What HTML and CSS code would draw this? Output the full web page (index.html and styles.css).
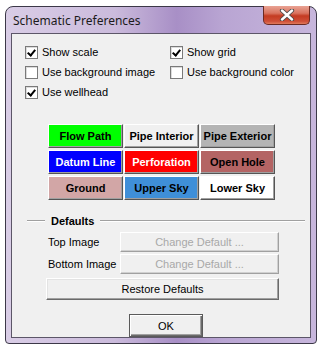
FILE: index.html
```html
<!DOCTYPE html>
<html lang="en">
<head>
    <meta charset="UTF-8">
    <meta name="viewport" content="width=device-width, initial-scale=1.0">
    <title>Schematic Preferences</title>
    <link rel="stylesheet" href="styles.css">
</head>
<body>
    <div class="window">
        <div class="titlebar">
            <span class="title">Schematic Preferences</span>
            <button class="close-btn" title="Close">
                <svg width="18" height="12" viewBox="0 0 18 12">
                    <path d="M4 1.5 L14 10.5 M14 1.5 L4 10.5" stroke="#4a4a4a" stroke-width="4.2" stroke-linecap="round"/>
                    <path d="M4 1.5 L14 10.5 M14 1.5 L4 10.5" stroke="#ffffff" stroke-width="2.4" stroke-linecap="round"/>
                </svg>
            </button>
        </div>

        <div class="client">
            <div class="options">
                <label class="check"><span class="box on"></span>Show scale</label>
                <label class="check"><span class="box on"></span>Show grid</label>
                <label class="check"><span class="box"></span>Use background image</label>
                <label class="check"><span class="box"></span>Use background color</label>
                <label class="check"><span class="box on"></span>Use wellhead</label>
            </div>

            <div class="colors">
                <button class="swatch flow">Flow Path</button>
                <button class="swatch pipe-in">Pipe Interior</button>
                <button class="swatch pipe-out">Pipe Exterior</button>
                <button class="swatch datum">Datum Line</button>
                <button class="swatch perf">Perforation</button>
                <button class="swatch open-hole">Open Hole</button>
                <button class="swatch ground">Ground</button>
                <button class="swatch upper-sky">Upper Sky</button>
                <button class="swatch lower-sky">Lower Sky</button>
            </div>

            <div class="group-title"><span>Defaults</span></div>

            <div class="default-row">
                <span class="row-label">Top Image</span>
                <button class="btn disabled">Change Default ...</button>
            </div>
            <div class="default-row">
                <span class="row-label">Bottom Image</span>
                <button class="btn disabled">Change Default ...</button>
            </div>

            <button class="btn restore">Restore Defaults</button>

            <button class="btn ok">OK</button>
        </div>
    </div>
</body>
</html>
```

FILE: styles.css
```css
body {
    margin: 0;
    background: #ffffff;
    font-family: "Liberation Sans", Arial, sans-serif;
    font-size: 11px;
    color: #000;
}

/* window frame */
.window {
    margin: 6px 0 0 5px;
    width: 300px;
    height: 330px;
    border: 1px solid #3c3848;
    border-radius: 8px 8px 4px 4px;
    background: linear-gradient(90deg, #d9cde6 0%, #cbbbdc 35%, #a88fc6 55%, #b9a5d3 70%, #c7b6dc 100%);
    display: flex;
    flex-direction: column;
    padding: 0 5px 6px 5px;
}

.titlebar {
    height: 26px;
    flex: none;
    display: flex;
    align-items: center;
    justify-content: space-between;
    margin: 0 -5px;
    padding-left: 7px;
}

.title {
    font-family: "Noto Sans", "Open Sans", sans-serif;
    font-size: 12px;
    color: #1b1b1b;
    margin-top: 1px;
}

.close-btn {
    align-self: flex-start;
    margin-top: -1px;
    margin-right: 6px;
    width: 47px;
    height: 19px;
    padding: 0;
    border: 1px solid #6b2a22;
    border-top: none;
    border-radius: 0 0 5px 5px;
    background: linear-gradient(180deg, #e9a394 0%, #d9735f 40%, #c43b22 55%, #cf4f38 85%, #e07a5c 100%);
    display: flex;
    align-items: center;
    justify-content: center;
}

.client {
    flex: 1;
    border: 1px solid #5c5668;
    background: #f0f0f0;
    display: flex;
    flex-direction: column;
    align-items: flex-start;
}

/* checkboxes */
.options {
    display: grid;
    grid-template-columns: 145px auto;
    grid-auto-rows: 20px;
    padding: 8px 0 0 13px;
}

.check {
    display: flex;
    align-items: center;
    gap: 4px;
    white-space: nowrap;
}

.box {
    width: 11px;
    height: 11px;
    border: 1px solid #7a7a7a;
    background: #fff;
    box-shadow: inset 1px 1px 0 #dcdcdc;
    position: relative;
}

.box.on::after {
    content: "";
    position: absolute;
    left: 3px;
    top: 1px;
    width: 3px;
    height: 6px;
    border: solid #000;
    border-width: 0 2px 2px 0;
    transform: rotate(40deg);
}

/* colour swatches */
.colors {
    display: grid;
    grid-template-columns: repeat(3, 75px);
    grid-auto-rows: 24px;
    column-gap: 1px;
    row-gap: 2px;
    margin: 22px 0 0 36px;
}

.swatch {
    font-family: "Liberation Sans", Arial, sans-serif;
    font-size: 11px;
    font-weight: bold;
    padding: 0;
    border: 1px solid;
    border-color: #ffffff #555555 #555555 #ffffff;
    box-shadow: inset -1px -1px 0 #a0a0a0;
    color: #000;
}

.flow { background: #00ff00; }
.pipe-in { background: #f0f0f0; }
.pipe-out { background: #b4b4b4; }
.datum { background: #0000ff; color: #fff; }
.perf { background: #ff0000; color: #fff; }
.open-hole { background: #b46464; }
.ground { background: #d2a6a6; }
.upper-sky { background: #3f8fd8; }
.lower-sky { background: #ffffff; }

/* defaults group */
.group-title {
    display: flex;
    align-items: center;
    align-self: stretch;
    height: 14px;
    margin: 14px 5px 0 15px;
    font-weight: bold;
}

.group-title::before,
.group-title::after {
    content: "";
    height: 1px;
    background: #a0a0a0;
    border-bottom: 1px solid #fff;
}

.group-title::before {
    width: 18px;
}

.group-title::after {
    flex: 1;
}

.group-title span {
    padding: 0 6px;
}

.default-row {
    display: flex;
    align-items: center;
    height: 20px;
    margin: 4px 0 0 36px;
}

.default-row + .default-row {
    margin-top: 2px;
}

.row-label {
    width: 72px;
}

.btn {
    font-family: "Liberation Sans", Arial, sans-serif;
    font-size: 11px;
    background: #f0f0f0;
    border: 1px solid;
    border-color: #ffffff #6a6a6a #6a6a6a #ffffff;
    box-shadow: inset -1px -1px 0 #a0a0a0, inset 1px 1px 0 #e3e3e3;
    padding: 0;
    color: #000;
}

.btn.disabled {
    width: 159px;
    height: 20px;
    color: #a8a8a8;
    border-color: #ffffff #a0a0a0 #a0a0a0 #ffffff;
    box-shadow: inset -1px -1px 0 #d0d0d0;
}

.restore {
    width: 233px;
    height: 22px;
    margin: 4px 0 0 34px;
}

.ok {
    width: 74px;
    height: 23px;
    margin: 14px 0 0 117px;
    border: 1px solid #5a5a5a;
    box-shadow: inset 1px 1px 0 #fff, inset -1px -1px 0 #6a6a6a, inset -2px -2px 0 #a0a0a0;
}
```
